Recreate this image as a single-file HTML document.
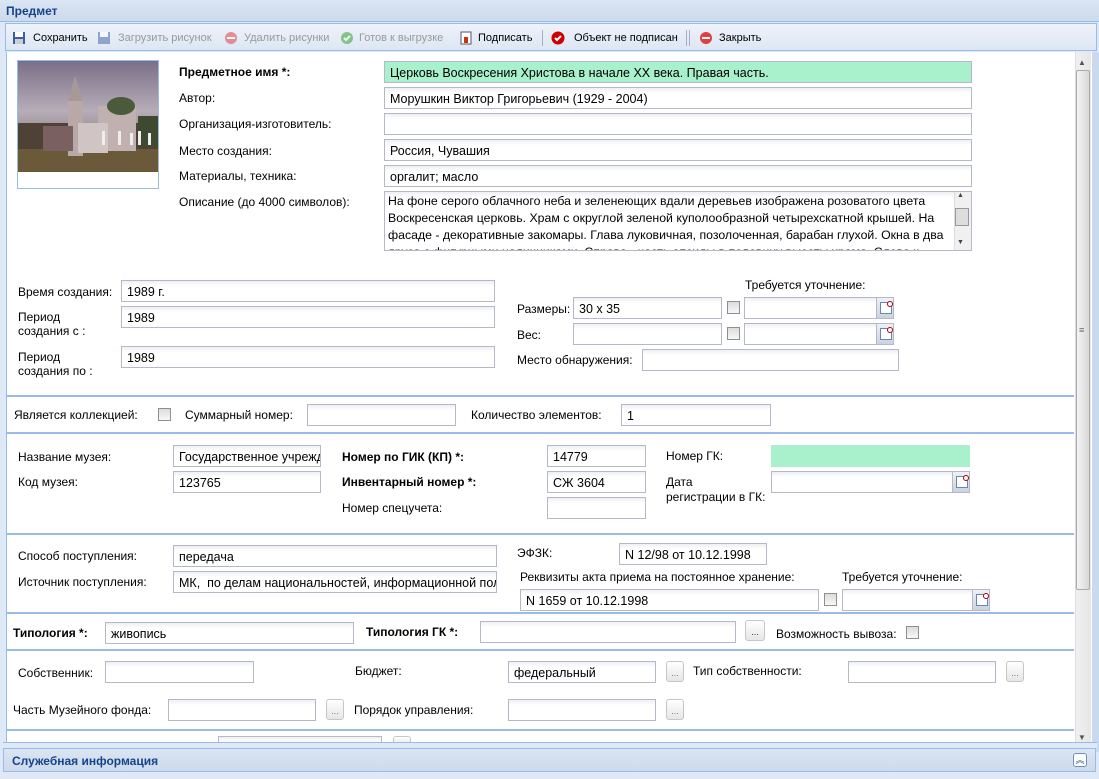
<!DOCTYPE html>
<html><head><meta charset="utf-8"><style>
*{box-sizing:border-box;margin:0;padding:0}
body{width:1099px;height:779px;overflow:hidden;background:#dfe8f6;font-family:"Liberation Sans",sans-serif;font-size:12px;color:#000;position:relative}
.a{position:absolute;white-space:nowrap}
.l{position:absolute;white-space:nowrap;font-size:12px;line-height:14px}
.b{font-weight:bold}
.i{position:absolute;height:22px;border:1px solid #b5b8c8;background:linear-gradient(#eef0f4,#fff 5px);font-size:12.5px;line-height:22px;padding-left:5px;overflow:hidden;white-space:nowrap}
.g{background:#a9f0cc;border-color:#b5b8c8}
.cb{position:absolute;width:13px;height:13px;border:1px solid #8e8f8f;background:linear-gradient(#dcdcdc,#f8f8f8)}
.tr{position:absolute;right:0;top:0;width:17px;height:20px;background:linear-gradient(#eef1f6,#c9d3e0);border-left:1px solid #b5b8c8}
.tr:after{content:"";position:absolute;left:3px;top:4px;width:10px;height:10px;border:1px solid #6a86b0;background:#fff}
.tr:before{content:"";position:absolute;left:10px;top:3px;width:4px;height:4px;border:1px solid #a00;border-radius:50%;background:#fff;z-index:1}
.btn{position:absolute;width:18px;height:21px;border:1px solid #c6c6c6;border-radius:3px;background:linear-gradient(#fff,#e6e6e6);font-size:9px;text-align:center;line-height:22px;color:#777}
.hl{position:absolute;left:7px;width:1067px;height:2px;background:#99bbe8}
.tb{position:absolute;top:27px;font-size:11px;line-height:22px}
.ic{position:absolute;width:14px;height:14px;top:31px}
</style></head><body>
<div class="a" style="left:0;top:0;width:1099px;height:22px;background:linear-gradient(#dbe5f3,#cddaea);border-bottom:1px solid #99bbe8"></div>
<div class="a b" style="left:6px;top:4px;color:#15428b;font-size:12px">Предмет</div>
<div class="a" style="left:5px;top:23px;width:1092px;height:28px;background:linear-gradient(#eef3fa,#dde6f3);border:1px solid #99bbe8"></div>
<svg class="ic" style="left:12px" viewBox="0 0 14 14"><rect x="1" y="1" width="12" height="12" fill="#3b5fa0"/><rect x="3" y="1" width="8" height="5" fill="#fff"/><rect x="3" y="8" width="8" height="5" fill="#ccd"/></svg>
<div class="tb" style="left:33px">Сохранить</div>
<svg class="ic" style="left:97px;opacity:.5" viewBox="0 0 14 14"><rect x="1" y="1" width="12" height="12" fill="#3b5fa0"/><rect x="3" y="1" width="8" height="5" fill="#fff"/></svg>
<div class="tb" style="left:118px;color:#999">Загрузить рисунок</div>
<svg class="ic" style="left:224px;opacity:.5" viewBox="0 0 14 14"><circle cx="7" cy="7" r="6" fill="#d33"/><rect x="3" y="6" width="8" height="2" fill="#fff"/></svg>
<div class="tb" style="left:244px;color:#999">Удалить рисунки</div>
<svg class="ic" style="left:340px;opacity:.6" viewBox="0 0 14 14"><circle cx="7" cy="7" r="6" fill="#4a4"/><path d="M4 7l2 2 4-4" stroke="#fff" stroke-width="2" fill="none"/></svg>
<div class="tb" style="left:359px;color:#999">Готов к выгрузке</div>
<svg class="ic" style="left:459px" viewBox="0 0 14 14"><rect x="2" y="1" width="10" height="12" fill="#fff" stroke="#557"/><rect x="5" y="6" width="4" height="6" fill="#c30"/></svg>
<div class="tb" style="left:478px">Подписать</div>
<div class="a" style="left:542px;top:30px;width:1px;height:16px;background:#aac"></div>
<svg class="ic" style="left:551px" viewBox="0 0 14 14"><circle cx="7" cy="7" r="6.5" fill="#c00"/><path d="M4 7l2 2 4-4" stroke="#fff" stroke-width="2" fill="none"/></svg>
<div class="tb" style="left:574px">Объект не подписан</div>
<div class="a" style="left:686px;top:30px;width:1px;height:16px;background:#aac"></div>
<div class="a" style="left:689px;top:30px;width:1px;height:16px;background:#aac"></div>
<svg class="ic" style="left:699px" viewBox="0 0 14 14"><circle cx="7" cy="7" r="6" fill="#e04040"/><rect x="3" y="6" width="8" height="2" fill="#fff"/></svg>
<div class="tb" style="left:719px">Закрыть</div>
<div class="a" style="left:6px;top:52px;width:1086px;height:694px;background:#fff;border-left:1px solid #99bbe8"></div>
<div class="a" style="left:1075px;top:52px;width:16px;height:694px;background:linear-gradient(90deg,#f0f0f0,#e6e6e6);border-left:1px solid #ddd"></div>
<div class="a" style="left:1076px;top:70px;width:14px;height:520px;background:linear-gradient(90deg,#f4f4f4,#d8d8d8);border:1px solid #aaa;border-radius:2px"></div>
<div class="a" style="left:1078px;top:58px;font-size:8px;color:#555">▲</div>
<div class="a" style="left:1079px;top:325px;font-size:9px;color:#666">≡</div>
<div class="a" style="left:1078px;top:733px;font-size:8px;color:#555">▼</div>
<div class="a" style="left:1092px;top:52px;width:7px;height:700px;background:#cad9ee"></div>
<div class="a" style="left:17px;top:60px;width:142px;height:129px;border:1px solid #99bbe8;background:#fff"></div>
<svg class="a" style="left:18px;top:61px" width="140" height="111" viewBox="0 0 140 111"><defs><linearGradient id="sk" x1="0" y1="0" x2="0" y2="1"><stop offset="0" stop-color="#7a6f88"/><stop offset=".45" stop-color="#b6adb8"/><stop offset="1" stop-color="#6a5a50"/></linearGradient></defs><rect width="140" height="111" fill="url(#sk)"/><rect x="0" y="62" width="140" height="49" fill="#4e4236"/><rect x="0" y="88" width="140" height="23" fill="#6b5a3a"/><rect x="120" y="55" width="20" height="30" fill="#3e4a30"/><rect x="50" y="40" width="15" height="55" fill="#b8a8a8"/><path d="M50 40l7-25 8 25z" fill="#a89898"/><rect x="80" y="45" width="38" height="45" fill="#c0b0b0"/><ellipse cx="103" cy="45" rx="14" ry="9" fill="#4a5a3a"/><rect x="25" y="65" width="30" height="25" fill="#7a6060"/><rect x="60" y="62" width="30" height="30" fill="#d0c4c4"/><g fill="#eee"><rect x="84" y="70" width="3" height="14"/><rect x="100" y="70" width="3" height="14"/><rect x="112" y="72" width="3" height="12"/><rect x="120" y="70" width="3" height="14"/><rect x="130" y="72" width="3" height="12"/></g></svg>
<div class="l b" style="left:179px;top:65px">Предметное имя *:</div>
<div class="l" style="left:179px;top:91px">Автор:</div>
<div class="l" style="left:179px;top:117px">Организация-изготовитель:</div>
<div class="l" style="left:179px;top:144px">Место создания:</div>
<div class="l" style="left:179px;top:169px">Материалы, техника:</div>
<div class="l" style="left:179px;top:195px">Описание (до 4000 символов):</div>
<div class="i g" style="left:384px;top:61px;width:588px">Церковь Воскресения Христова в начале XX века. Правая часть.</div>
<div class="i" style="left:384px;top:87px;width:588px">Морушкин Виктор Григорьевич (1929 - 2004)</div>
<div class="i" style="left:384px;top:113px;width:588px"></div>
<div class="i" style="left:384px;top:139px;width:588px">Россия, Чувашия</div>
<div class="i" style="left:384px;top:165px;width:588px">оргалит; масло</div>
<div class="i" style="left:384px;top:191px;width:588px;height:60px;white-space:normal;line-height:17px;padding:1px 20px 0 3px;font-size:12.3px">На фоне серого облачного неба и зеленеющих вдали деревьев изображена розоватого цвета Воскресенская церковь. Храм с округлой зеленой куполообразной четырехскатной крышей. На фасаде - декоративные закомары. Глава луковичная, позолоченная, барабан глухой. Окна в два яруса с фигурными наличниками. Справа - часть апсиды в половину высоты храма. Слева к храму</div>
<div class="a" style="left:954px;top:192px;width:17px;height:58px;background:#f0f0f0;border-left:1px solid #ddd"></div>
<div class="a" style="left:955px;top:208px;width:14px;height:18px;background:#ddd;border:1px solid #999"></div>
<div class="a" style="left:957px;top:192px;font-size:7px;color:#444">▲</div>
<div class="a" style="left:957px;top:239px;font-size:7px;color:#444">▼</div>
<div class="l" style="left:18px;top:285px">Время создания:</div>
<div class="l" style="left:18px;top:310px">Период<br>создания с :</div>
<div class="l" style="left:18px;top:350px">Период<br>создания по :</div>
<div class="i" style="left:121px;top:280px;width:374px">1989 г.</div>
<div class="i" style="left:121px;top:306px;width:374px">1989</div>
<div class="i" style="left:121px;top:346px;width:374px">1989</div>
<div class="l" style="left:745px;top:278px">Требуется уточнение:</div>
<div class="l" style="left:517px;top:302px">Размеры:</div>
<div class="l" style="left:517px;top:328px">Вес:</div>
<div class="l" style="left:517px;top:353px">Место обнаружения:</div>
<div class="i" style="left:573px;top:297px;width:149px">30 х 35</div>
<div class="i" style="left:573px;top:323px;width:149px"></div>
<div class="cb" style="left:727px;top:301px"></div>
<div class="cb" style="left:727px;top:327px"></div>
<div class="i" style="left:744px;top:297px;width:150px"><div class="tr"></div></div>
<div class="i" style="left:744px;top:323px;width:150px"><div class="tr"></div></div>
<div class="i" style="left:642px;top:349px;width:257px"></div>
<div class="hl" style="top:395px"></div>
<div class="l" style="left:14px;top:408px">Является коллекцией:</div>
<div class="cb" style="left:158px;top:408px"></div>
<div class="l" style="left:185px;top:408px">Суммарный номер:</div>
<div class="i" style="left:307px;top:404px;width:149px"></div>
<div class="l" style="left:471px;top:408px">Количество элементов:</div>
<div class="i" style="left:621px;top:404px;width:150px">1</div>
<div class="hl" style="top:432px"></div>
<div class="l" style="left:18px;top:450px">Название музея:</div>
<div class="l" style="left:18px;top:475px">Код музея:</div>
<div class="i" style="left:173px;top:445px;width:148px">Государственное учреждение</div>
<div class="i" style="left:173px;top:471px;width:148px">123765</div>
<div class="l b" style="left:342px;top:450px">Номер по ГИК (КП) *:</div>
<div class="l b" style="left:342px;top:475px">Инвентарный номер *:</div>
<div class="l" style="left:342px;top:501px">Номер спецучета:</div>
<div class="i" style="left:547px;top:445px;width:99px">14779</div>
<div class="i" style="left:547px;top:471px;width:99px">СЖ 3604</div>
<div class="i" style="left:547px;top:497px;width:99px"></div>
<div class="l" style="left:666px;top:449px">Номер ГК:</div>
<div class="l" style="left:666px;top:475px;line-height:15px">Дата<br>регистрации в ГК:</div>
<div class="i g" style="left:771px;top:445px;width:199px;border-color:#a9f0cc"></div>
<div class="i" style="left:771px;top:471px;width:199px"><div class="tr"></div></div>
<div class="hl" style="top:533px"></div>
<div class="l" style="left:18px;top:549px">Способ поступления:</div>
<div class="l" style="left:18px;top:575px">Источник поступления:</div>
<div class="i" style="left:173px;top:545px;width:324px">передача</div>
<div class="i" style="left:173px;top:571px;width:324px">МК,&nbsp; по делам национальностей, информационной политики</div>
<div class="l" style="left:517px;top:546px">ЭФЗК:</div>
<div class="i" style="left:619px;top:543px;width:148px">N 12/98 от 10.12.1998</div>
<div class="l" style="left:520px;top:570px">Реквизиты акта приема на постоянное хранение:</div>
<div class="l" style="left:842px;top:570px">Требуется уточнение:</div>
<div class="i" style="left:520px;top:589px;width:299px">N 1659 от 10.12.1998</div>
<div class="cb" style="left:824px;top:593px"></div>
<div class="i" style="left:842px;top:589px;width:148px"><div class="tr"></div></div>
<div class="hl" style="top:612px"></div>
<div class="l b" style="left:13px;top:626px">Типология *:</div>
<div class="i" style="left:105px;top:622px;width:249px">живопись</div>
<div class="l b" style="left:366px;top:625px">Типология ГК *:</div>
<div class="i" style="left:480px;top:621px;width:256px"></div>
<div class="btn" style="left:745px;top:620px;width:20px;color:#333">...</div>
<div class="l" style="left:776px;top:627px">Возможность вывоза:</div>
<div class="cb" style="left:906px;top:626px"></div>
<div class="hl" style="top:649px"></div>
<div class="l" style="left:18px;top:666px">Собственник:</div>
<div class="i" style="left:105px;top:661px;width:149px"></div>
<div class="l" style="left:355px;top:664px">Бюджет:</div>
<div class="i" style="left:508px;top:661px;width:148px">федеральный</div>
<div class="btn" style="left:666px;top:661px">...</div>
<div class="l" style="left:693px;top:664px">Тип собственности:</div>
<div class="i" style="left:848px;top:661px;width:148px"></div>
<div class="btn" style="left:1006px;top:661px">...</div>
<div class="l" style="left:13px;top:703px">Часть Музейного фонда:</div>
<div class="i" style="left:168px;top:699px;width:148px"></div>
<div class="btn" style="left:326px;top:699px">...</div>
<div class="l" style="left:354px;top:703px">Порядок управления:</div>
<div class="i" style="left:508px;top:699px;width:148px"></div>
<div class="btn" style="left:666px;top:699px">...</div>
<div class="hl" style="top:729px"></div>
<div class="i" style="left:218px;top:736px;width:164px;height:12px"></div>
<div class="btn" style="left:393px;top:736px;height:10px"></div>
<div class="a" style="left:3px;top:742px;width:1094px;height:6px;background:#dfe8f6;border-top:1px solid #99bbe8"></div>
<div class="a" style="left:3px;top:748px;width:1093px;height:24px;background:linear-gradient(#dbe5f3,#cddaea);border:1px solid #99bbe8"></div>
<div class="a b" style="left:12px;top:754px;color:#15428b;font-size:12px">Служебная информация</div>
<div class="a" style="left:1073px;top:753px;width:14px;height:14px;border:1px solid #6d8fc0;border-radius:3px;background:#fff;font-size:9px;line-height:12px;text-align:center;color:#15428b">︽</div>
<div class="a" style="left:0;top:773px;width:1099px;height:6px;background:#dfe8f6"></div>
</body></html>
